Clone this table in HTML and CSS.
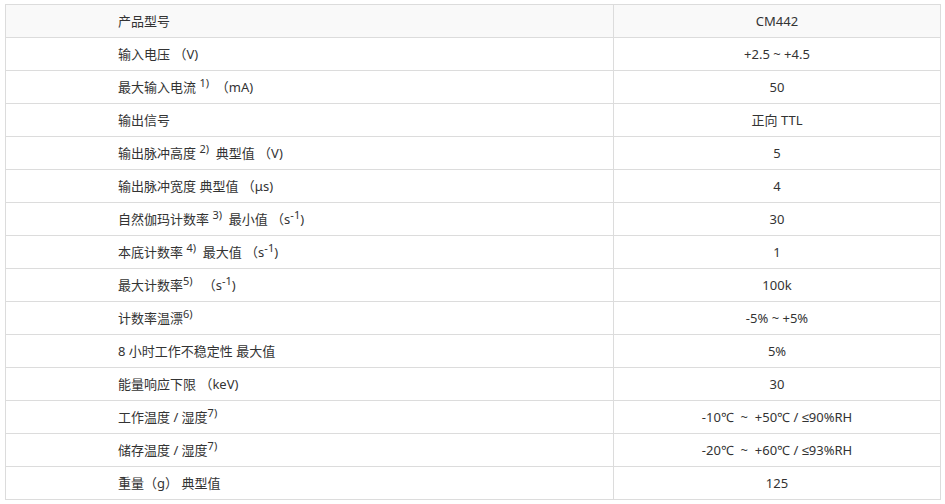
FILE: index.html
```html
<!DOCTYPE html>
<html lang="zh">
<head>
<meta charset="utf-8">
<link rel="stylesheet" href="styles.css">
</head>
<body>
<table class="spec">
  <tr class="head"><td class="k">产品型号</td><td class="v">CM442</td></tr>
  <tr><td class="k">输入电压 （V)</td><td class="v">+2.5 ~ +4.5</td></tr>
  <tr><td class="k">最大输入电流 <sup>1)</sup> &nbsp;（mA)</td><td class="v">50</td></tr>
  <tr><td class="k">输出信号</td><td class="v">正向 TTL</td></tr>
  <tr><td class="k">输出脉冲高度 <sup>2)</sup> &nbsp;典型值 （V)</td><td class="v">5</td></tr>
  <tr><td class="k">输出脉冲宽度 典型值 （μs)</td><td class="v">4</td></tr>
  <tr><td class="k">自然伽玛计数率 <sup>3)</sup> &nbsp;最小值 （s<sup>-1</sup>)</td><td class="v">30</td></tr>
  <tr><td class="k">本底计数率 <sup>4)</sup> &nbsp;最大值 （s<sup>-1</sup>)</td><td class="v">1</td></tr>
  <tr><td class="k">最大计数率<sup>5)</sup> &nbsp; （s<sup>-1</sup>)</td><td class="v">100k</td></tr>
  <tr><td class="k">计数率温漂<sup>6)</sup></td><td class="v">-5% ~ +5%</td></tr>
  <tr><td class="k">8 小时工作不稳定性 最大值</td><td class="v">5%</td></tr>
  <tr><td class="k">能量响应下限 （keV)</td><td class="v">30</td></tr>
  <tr><td class="k">工作温度 / 湿度<sup>7)</sup></td><td class="v">-10℃ &nbsp;~ &nbsp;+50℃ / <span class="sym">≤</span>90%RH</td></tr>
  <tr><td class="k">储存温度 / 湿度<sup>7)</sup></td><td class="v">-20℃ &nbsp;~ &nbsp;+60℃ / <span class="sym">≤</span>93%RH</td></tr>
  <tr><td class="k">重量（g） 典型值</td><td class="v">125</td></tr>
</table>
</body>
</html>
```

FILE: styles.css
```css
html, body {
  margin: 0;
  background: #fff;
}
body {
  padding: 4px 5px;
  font-family: "Noto Sans", "Noto Sans CJK SC", sans-serif;
  font-size: 13px;
  color: #333;
}
.spec {
  border-collapse: collapse;
  width: 936px;
  table-layout: fixed;
}
.spec td {
  box-sizing: border-box;
  border: 1px solid #dcdcdc;
  height: 33px;
  padding: 0;
  line-height: 16px;
  white-space: nowrap;
}
.spec td.k {
  width: 608px;
  padding-left: 112px;
}
.spec td.v {
  text-align: center;
}
.spec tr.head td {
  background: #f9f9f9;
}
.spec sup {
  font-size: 11px;
  line-height: 0;
  vertical-align: 5px;
}
.sym {
  font-family: "Liberation Sans", sans-serif;
}
```
